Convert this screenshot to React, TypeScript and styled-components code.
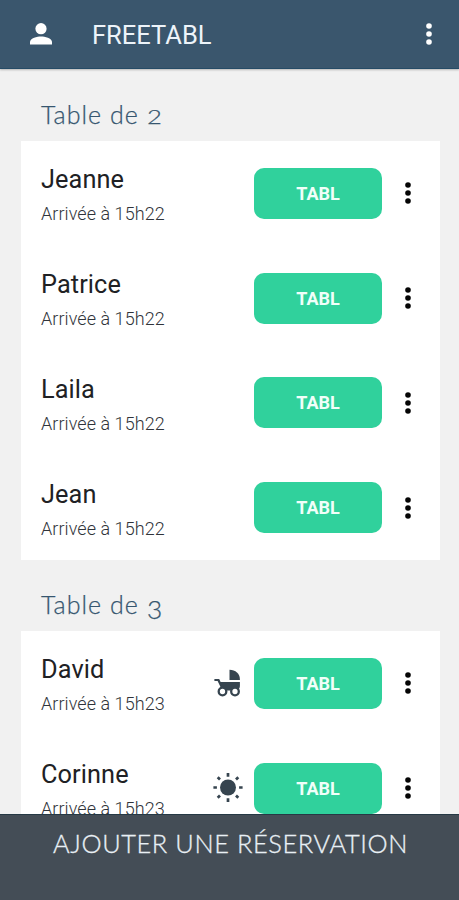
import React from "react";
import styled, { createGlobalStyle } from "styled-components";

const GlobalStyle = createGlobalStyle`
  * { box-sizing: border-box; }
  body { margin: 0; background: #f1f1f1; overflow: hidden; }
  button { border: 0; padding: 0; background: none; cursor: pointer; }
`;

const Screen = styled.main`
  height: 900px;
  display: flex;
  flex-direction: column;
  overflow: hidden;
  background: #f1f1f1;
  font-family: Roboto, sans-serif;
`;

const Header = styled.header`
  flex: none;
  height: 69px;
  display: flex;
  align-items: center;
  padding: 0 21px 0 30px;
  background: #3a566d;
  border-bottom: 1px solid #254b66;
  box-shadow: 0 1px 2px rgba(0, 0, 0, 0.25);
  color: #fff;
`;

const AppTitle = styled.h1`
  flex: 1;
  margin: 2px 0 0 40px;
  font-size: 25.5px;
  line-height: 30px;
  font-weight: 400;
  color: #edf4fa;
`;

const IconButton = styled.button<{ $color: string }>`
  width: 18px;
  height: 32px;
  display: flex;
  align-items: center;
  justify-content: center;
  color: ${(p) => p.$color};
`;

const Content = styled.div`
  flex: 1;
  min-height: 0;
  overflow: hidden;
  padding: 0 19.5px 0 20.5px;
`;

const GroupTitle = styled.h2<{ $first?: boolean }>`
  height: ${(p) => (p.$first ? 72 : 71)}px;
  margin: 0;
  padding: ${(p) => (p.$first ? 29 : 28)}px 0 0 20.5px;
  font-family: Lato, sans-serif;
  font-size: 25px;
  line-height: 32px;
  font-weight: 300;
  white-space: pre;
  color: #36566f;
  letter-spacing: 1.05px;
  -webkit-text-stroke: 0.25px #36566f;
`;

const OldStyleDigit = styled.span<{ $drop: boolean }>`
  display: inline-block;
  font-size: ${(p) => (p.$drop ? 25 : 20.5)}px;
  line-height: 20px;
  transform-origin: left center;
  transform: translateY(${(p) => (p.$drop ? 5 : 0)}px) scaleX(${(p) => (p.$drop ? 1.05 : 1.25)});
`;

const Card = styled.section`
  background: #fff;
`;

const Row = styled.article`
  height: 104.75px;
  display: flex;
  align-items: center;
  padding: 0 22.5px 0 20.5px;
`;

const Guest = styled.div`
  flex: 1;
  padding-top: 6px;
`;

const Name = styled.h3`
  margin: 0;
  font-size: 25.3px;
  line-height: 34px;
  font-weight: 400;
  letter-spacing: 0.1px;
  color: #202124;
`;

const Arrival = styled.p`
  margin: 2px 0 0;
  font-size: 18px;
  line-height: 30px;
  font-weight: 300;
  letter-spacing: 0.06px;
  color: #30343a;
`;

const Marker = styled.span`
  width: 30px;
  height: 30px;
  margin-right: 11px;
  color: #36444f;
`;

const SeatButton = styled.button`
  width: 128px;
  height: 51px;
  margin-right: 17px;
  border-radius: 10px;
  background: #30d19c;
  color: #f0fff9;
  font-family: Roboto, sans-serif;
  font-size: 18px;
  font-weight: 700;
`;

const Footer = styled.button`
  flex: none;
  height: 86px;
  padding: 13px 0 0 2px;
  display: flex;
  justify-content: center;
  border-top: 1px solid #263945;
  background: #444d56;
  color: #e9f0f5;
  font-family: Lato, sans-serif;
  font-size: 25.4px;
  line-height: 30px;
  font-weight: 300;
  letter-spacing: 0.6px;
  white-space: nowrap;
  -webkit-text-stroke: 0.3px #e9f0f5;
`;

const Dots = () => (
  <svg width="8" height="24" viewBox="0 0 8 24" fill="currentColor">
    <circle cx="4" cy="4" r="2.8" />
    <circle cx="4" cy="12" r="2.8" />
    <circle cx="4" cy="20" r="2.8" />
  </svg>
);

const Person = () => (
  <svg width="22" height="22" viewBox="0 0 22 22" fill="currentColor">
    <circle cx="11" cy="5.7" r="5.6" />
    <path d="M0 21.5v-2.7C0 15.2 7.3 13.4 11 13.4s11 1.8 11 5.4v2.7z" />
  </svg>
);

const Stroller = () => (
  <svg width="30" height="30" viewBox="0 0 30 30" fill="currentColor">
    <path d="M16.5 1.8c6 0 10.4 4 10.4 9.5v.8H16.5z" />
    <path d="M1.4 11h4.8l1.4 3h19.3v4c0 2-1.2 3.6-3 4.4H9.2L4.6 13H1.4z" />
    <g fill="#fff" stroke="currentColor" strokeWidth="2.3">
      <circle cx="9.5" cy="23.5" r="3.8" />
      <circle cx="22" cy="23.5" r="3.8" />
    </g>
  </svg>
);

const Sun = () => (
  <svg width="30" height="30" viewBox="0 0 30 30" fill="currentColor">
    <circle cx="15" cy="14.5" r="8" />
    <path
      d="M15 0v3.7M15 25.3V29M.4 14.5h3.5M26.1 14.5h3.5M4.7 4.2l2.3 2.3M23 22.5l2.3 2.3M4.7 24.8l2.3-2.3M23 6.5l2.3-2.3"
      stroke="currentColor"
      strokeWidth="2.7"
    />
  </svg>
);

type Booking = { name: string; time: string; marker?: "stroller" | "sun" };

const groups: { size: number; bookings: Booking[] }[] = [
  {
    size: 2,
    bookings: [
      { name: "Jeanne", time: "15h22" },
      { name: "Patrice", time: "15h22" },
      { name: "Laila", time: "15h22" },
      { name: "Jean", time: "15h22" },
    ],
  },
  {
    size: 3,
    bookings: [
      { name: "David", time: "15h23", marker: "stroller" },
      { name: "Corinne", time: "15h23", marker: "sun" },
    ],
  },
];

export default function App() {
  return (
    <Screen>
      <GlobalStyle />
      <Header>
        <Person />
        <AppTitle>FREETABL</AppTitle>
        <IconButton $color="#fff" aria-label="Menu">
          <Dots />
        </IconButton>
      </Header>
      <Content>
        {groups.map((group, i) => (
          <React.Fragment key={group.size}>
            <GroupTitle $first={i === 0}>
              {"Table de "}
              <OldStyleDigit $drop={group.size === 3}>{group.size}</OldStyleDigit>
            </GroupTitle>
            <Card>
              {group.bookings.map((b) => (
                <Row key={b.name}>
                  <Guest>
                    <Name>{b.name}</Name>
                    <Arrival>Arrivée à {b.time}</Arrival>
                  </Guest>
                  {b.marker && <Marker>{b.marker === "sun" ? <Sun /> : <Stroller />}</Marker>}
                  <SeatButton>TABL</SeatButton>
                  <IconButton $color="#050505" aria-label="Options">
                    <Dots />
                  </IconButton>
                </Row>
              ))}
            </Card>
          </React.Fragment>
        ))}
      </Content>
      <Footer>AJOUTER UNE RÉSERVATION</Footer>
    </Screen>
  );
}
